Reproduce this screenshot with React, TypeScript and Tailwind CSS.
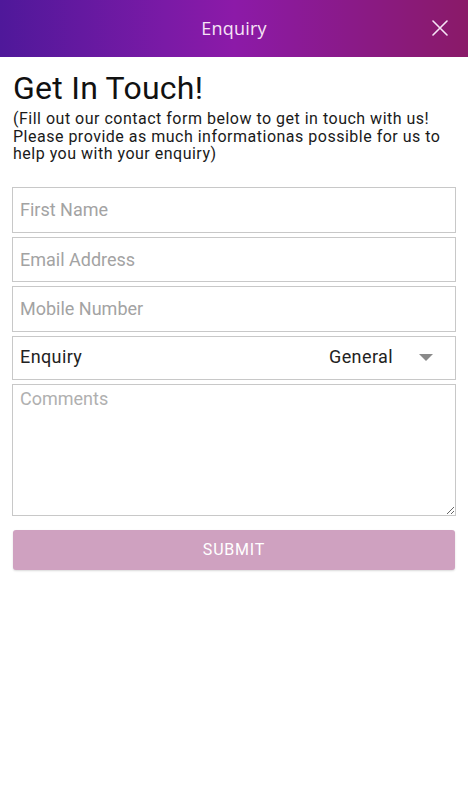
import React from "react";

export default function App() {
  const field =
    "w-full border border-[#c8c8c8] px-[7px] text-[18px] text-[#222] placeholder:text-[#a3a3a3] outline-none bg-white";
  return (
    <div className="w-[468px] h-[800px] bg-white" style={{ fontFamily: "Roboto, 'Noto Sans', sans-serif" }}>
      <header className="relative h-[57px] flex items-center justify-center bg-[linear-gradient(90deg,#4f189a_0%,#7a1aa6_35%,#8c1aa8_50%,#8a1a88_75%,#8a1a68_100%)]">
        <span className="text-[18px] font-medium text-[#f6e4f6] tracking-[0.2px]" style={{ fontFamily: "'Open Sans', sans-serif" }}>
          Enquiry
        </span>
        <button className="absolute right-[20px] top-[20px] w-[16px] h-[16px]">
          <svg width="16" height="16" viewBox="0 0 16 16">
            <path d="M1 1L15 15M15 1L1 15" stroke="#f6e4f6" strokeWidth="1.6" strokeLinecap="round" />
          </svg>
        </button>
      </header>
      <div className="px-[12px]">
        <h1 className="pl-[1px] mt-[13px] text-[32px] leading-[36px] tracking-[0.25px] text-[#111]">Get In Touch!</h1>
        <p className="pl-[1px] mt-[4px] text-[16px] leading-[17.5px] tracking-[0.5px] text-[#1a1a1a]">
          (Fill out our contact form below to get in touch with us! Please provide as much informationas possible for us to help you with your enquiry)
        </p>
        <form className="mt-[24px] flex flex-col gap-[4px]">
          <input className={`${field} h-[46px]`} placeholder="First Name" />
          <input className={`${field} h-[45px]`} placeholder="Email Address" />
          <input className={`${field} h-[46px]`} placeholder="Mobile Number" />
          <div className="h-[44px] w-full border border-[#c8c8c8] flex items-center pl-[7px] pb-[3px] text-[18px] tracking-[0.4px] text-[#222]">
            <span className="flex-1">Enquiry</span>
            <span className="mr-[26px]">General</span>
            <svg width="14" height="7" viewBox="0 0 14 7" className="mr-[22px] mt-[3px]">
              <path d="M0 0H14L7 7Z" fill="#8a8a8a" />
            </svg>
          </div>
          <textarea
            className="h-[132px] w-full border border-[#c8c8c8] px-[7px] py-0 text-[18px] placeholder:text-[#b0b0b0] outline-none resize-y"
            placeholder="Comments"
          />
          <button
            type="button"
            className="mt-[10px] mx-[1px] h-[40px] rounded-[3px] bg-[#cfa1c0] text-white text-[16px] tracking-[0.8px] shadow-[0_1px_2px_rgba(0,0,0,0.15)]"
          >
            SUBMIT
          </button>
        </form>
      </div>
    </div>
  );
}
